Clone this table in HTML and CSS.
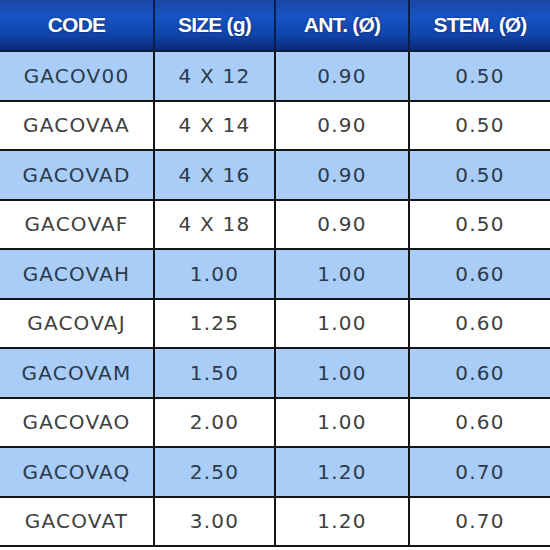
FILE: index.html
```html
<!DOCTYPE html>
<html lang="en">
<head>
    <meta charset="UTF-8">
    <title>Size table</title>
    <link rel="stylesheet" href="styles.css">
</head>
<body>
    <table class="sizes">
        <thead>
            <tr>
                <th class="c1">CODE</th>
                <th class="c2">SIZE (g)</th>
                <th class="c3">ANT. (Ø)</th>
                <th class="c4">STEM. (Ø)</th>
            </tr>
        </thead>
        <tbody>
            <tr class="blue"><td>GACOV00</td><td>4 X 12</td><td>0.90</td><td>0.50</td></tr>
            <tr><td>GACOVAA</td><td>4 X 14</td><td>0.90</td><td>0.50</td></tr>
            <tr class="blue"><td>GACOVAD</td><td>4 X 16</td><td>0.90</td><td>0.50</td></tr>
            <tr><td>GACOVAF</td><td>4 X 18</td><td>0.90</td><td>0.50</td></tr>
            <tr class="blue"><td>GACOVAH</td><td>1.00</td><td>1.00</td><td>0.60</td></tr>
            <tr><td>GACOVAJ</td><td>1.25</td><td>1.00</td><td>0.60</td></tr>
            <tr class="blue"><td>GACOVAM</td><td>1.50</td><td>1.00</td><td>0.60</td></tr>
            <tr><td>GACOVAO</td><td>2.00</td><td>1.00</td><td>0.60</td></tr>
            <tr class="blue"><td>GACOVAQ</td><td>2.50</td><td>1.20</td><td>0.70</td></tr>
            <tr><td>GACOVAT</td><td>3.00</td><td>1.20</td><td>0.70</td></tr>
        </tbody>
    </table>
</body>
</html>
```

FILE: styles.css
```css
html, body {
    margin: 0;
    background: #fff;
    overflow: hidden;
}
.sizes {
    border-collapse: collapse;
    table-layout: fixed;
    width: 550px;
    font-family: "DejaVu Sans", sans-serif;
}
.c1 { width: 153px; }
.c2 { width: 119px; }
.c3 { width: 132px; }
.sizes th {
    height: 50px;
    padding: 0;
    font-family: "Liberation Sans", Arial, sans-serif;
    font-size: 21px;
    font-weight: bold;
    letter-spacing: -0.8px;
    color: #fff;
    text-shadow: 0 0 2px #0a1f55;
    background: linear-gradient(#1a47a6, #1653c4 35%, #1044a8 70%, #0a2a78);
    border-left: 2px solid #0b1d4a;
    border-bottom: 2px solid #0d1d3a;
}
.sizes td {
    height: 47.5px;
    padding: 0;
    text-align: center;
    font-size: 20px;
    letter-spacing: 1.2px;
    color: #404040;
    background: #fff;
    border-left: 2px solid #141414;
    border-bottom: 2px solid #141414;
}
.sizes th:first-child,
.sizes td:first-child {
    border-left: none;
}
.sizes tr.blue td {
    background: #a9cdf6;
    color: #2b3a4c;
}
```
